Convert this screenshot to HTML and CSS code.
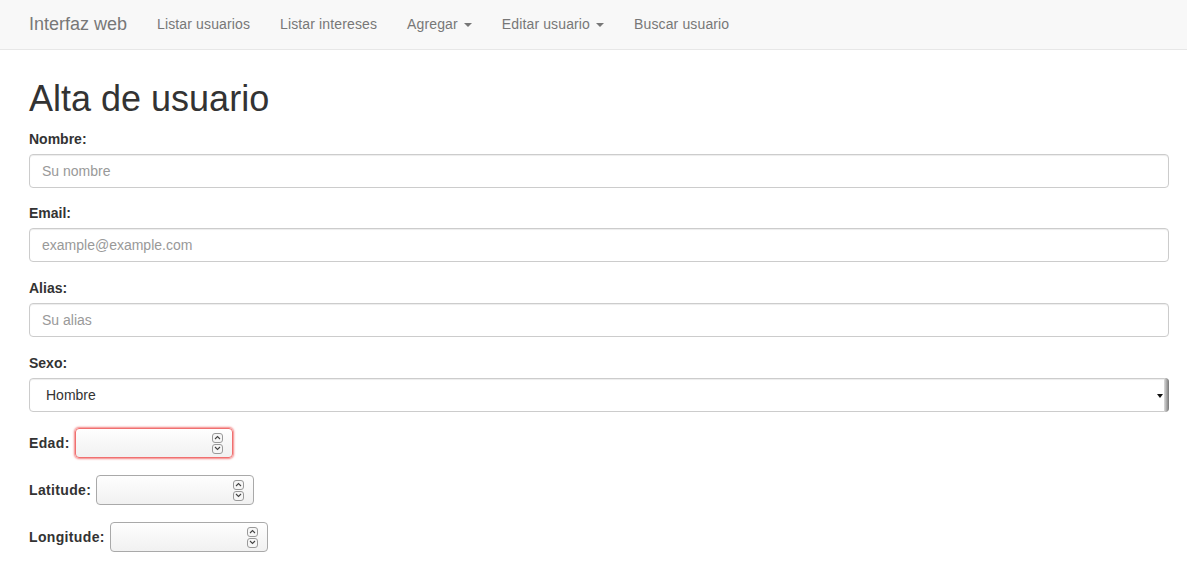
FILE: index.html
```html
<!DOCTYPE html>
<html lang="es">
<head>
<meta charset="utf-8">
<title>Alta de usuario</title>
<link rel="stylesheet" href="styles.css">
</head>
<body>
<nav class="navbar">
  <a class="brand" href="#">Interfaz web</a>
  <ul class="nav">
    <li><a href="#">Listar usuarios</a></li>
    <li><a href="#">Listar intereses</a></li>
    <li><a href="#">Agregar <span class="caret"></span></a></li>
    <li><a href="#">Editar usuario <span class="caret"></span></a></li>
    <li><a href="#">Buscar usuario</a></li>
  </ul>
</nav>
<main class="main">
  <h1 class="title">Alta de usuario</h1>
  <form class="form">
    <div class="group">
      <label class="label" for="nombre">Nombre:</label>
      <input class="control" id="nombre" type="text" placeholder="Su nombre">
    </div>
    <div class="group">
      <label class="label" for="email">Email:</label>
      <input class="control" id="email" type="email" placeholder="example@example.com">
    </div>
    <div class="group">
      <label class="label" for="alias">Alias:</label>
      <input class="control" id="alias" type="text" placeholder="Su alias">
    </div>
    <div class="group">
      <label class="label" for="sexo">Sexo:</label>
      <div class="select-wrap">
        <select class="control select" id="sexo">
          <option>Hombre</option>
          <option>Mujer</option>
        </select>
        <span class="sel-arrow"></span>
        <span class="sel-edge"></span>
      </div>
    </div>
    <div class="row">
      <label class="label inline" for="edad">Edad:</label>
      <div class="numbox invalid">
        <input class="num" id="edad" type="text">
        <span class="spin">
          <span class="spin-btn"><svg width="7" height="5" viewBox="0 0 7 5"><path d="M1 4 L3.5 1.5 L6 4" fill="none" stroke="#444" stroke-width="1.1"/></svg></span>
          <span class="spin-btn"><svg width="7" height="5" viewBox="0 0 7 5"><path d="M1 1 L3.5 3.5 L6 1" fill="none" stroke="#444" stroke-width="1.1"/></svg></span>
        </span>
      </div>
    </div>
    <div class="row">
      <label class="label inline" for="lat">Latitude:</label>
      <div class="numbox">
        <input class="num" id="lat" type="text">
        <span class="spin">
          <span class="spin-btn"><svg width="7" height="5" viewBox="0 0 7 5"><path d="M1 4 L3.5 1.5 L6 4" fill="none" stroke="#444" stroke-width="1.1"/></svg></span>
          <span class="spin-btn"><svg width="7" height="5" viewBox="0 0 7 5"><path d="M1 1 L3.5 3.5 L6 1" fill="none" stroke="#444" stroke-width="1.1"/></svg></span>
        </span>
      </div>
    </div>
    <div class="row">
      <label class="label inline" for="lon">Longitude:</label>
      <div class="numbox">
        <input class="num" id="lon" type="text">
        <span class="spin">
          <span class="spin-btn"><svg width="7" height="5" viewBox="0 0 7 5"><path d="M1 4 L3.5 1.5 L6 4" fill="none" stroke="#444" stroke-width="1.1"/></svg></span>
          <span class="spin-btn"><svg width="7" height="5" viewBox="0 0 7 5"><path d="M1 1 L3.5 3.5 L6 1" fill="none" stroke="#444" stroke-width="1.1"/></svg></span>
        </span>
      </div>
    </div>
  </form>
</main>
</body>
</html>
```

FILE: styles.css
```css
* { box-sizing: border-box; }
html, body { margin: 0; padding: 0; }
body {
  font-family: "Liberation Sans", Arial, Helvetica, sans-serif;
  font-size: 14px;
  line-height: 20px;
  color: #333;
  background: #fff;
}
.navbar {
  display: flex;
  align-items: center;
  height: 50px;
  background: #f8f8f8;
  border-bottom: 1px solid #e7e7e7;
  padding-left: 15px;
}
.brand {
  font-size: 18px;
  line-height: 20px;
  padding: 14px 15px 15px 14px;
  color: #777;
  text-decoration: none;
}
.nav {
  display: flex;
  list-style: none;
  margin: 0;
  padding: 0;
}
.nav a {
  display: block;
  padding: 14px 15px 15px;
  color: #777;
  text-decoration: none;
  line-height: 20px;
  letter-spacing: 0.13px;
}
.caret {
  display: inline-block;
  width: 0;
  height: 0;
  margin-left: 2px;
  vertical-align: middle;
  border-top: 4px solid #777;
  border-left: 4px solid transparent;
  border-right: 4px solid transparent;
}
.main {
  padding: 29px 18px 0 29px;
}
.title {
  font-size: 36px;
  font-weight: 400;
  line-height: 39.6px;
  margin: 0 0 10px;
  color: #333;
}
.group {
  display: flex;
  flex-direction: column;
  margin-bottom: 15.67px;
}
.label {
  font-weight: 700;
  margin-bottom: 5px;
  line-height: 20px;
}
.control {
  display: block;
  width: 100%;
  height: 34px;
  padding: 6px 12px;
  font-family: inherit;
  font-size: 14px;
  line-height: 20px;
  color: #555;
  background: #fff;
  border: 1px solid #ccc;
  border-radius: 4px;
  box-shadow: inset 0 1px 1px rgba(0,0,0,.075);
  outline: none;
}
.control::placeholder { color: #999; }
.select-wrap { position: relative; }
.select {
  -webkit-appearance: none;
  appearance: none;
  padding-left: 16px;
  color: #333;
}
.sel-arrow {
  position: absolute;
  right: 6px;
  top: 16px;
  width: 0;
  height: 0;
  border-top: 4px solid #111;
  border-left: 3px solid transparent;
  border-right: 3px solid transparent;
  pointer-events: none;
}
.sel-edge {
  position: absolute;
  right: 0;
  top: 0;
  bottom: 0;
  width: 5px;
  border-radius: 0 4px 4px 0;
  background: linear-gradient(to right, #ddd, #777);
  pointer-events: none;
}
.row {
  display: flex;
  align-items: center;
  gap: 5px;
  height: 32px;
  margin-bottom: 15px;
}
.label.inline {
  margin-bottom: 0;
  letter-spacing: 0.35px;
}
.numbox {
  display: flex;
  align-items: center;
  width: 158px;
  height: 30px;
  border: 1px solid #a9a9a9;
  border-radius: 4px;
  background: linear-gradient(to bottom, #fefefe, #f1f1f1);
  padding-right: 9px;
}
.numbox.invalid {
  border-color: #f07070;
  box-shadow: 0 0 2px 1px rgba(240, 100, 100, .8);
}
.num {
  flex: 1;
  min-width: 0;
  border: 0;
  background: transparent;
  outline: none;
  font-family: inherit;
  font-size: 14px;
  height: 100%;
}
.spin {
  display: flex;
  flex-direction: column;
  gap: 1px;
}
.spin-btn {
  display: flex;
  align-items: center;
  justify-content: center;
  width: 11px;
  height: 10px;
  border: 1px solid #999;
  border-radius: 3px;
  background: #f6f6f6;
}
.spin-btn svg { display: block; }
```
